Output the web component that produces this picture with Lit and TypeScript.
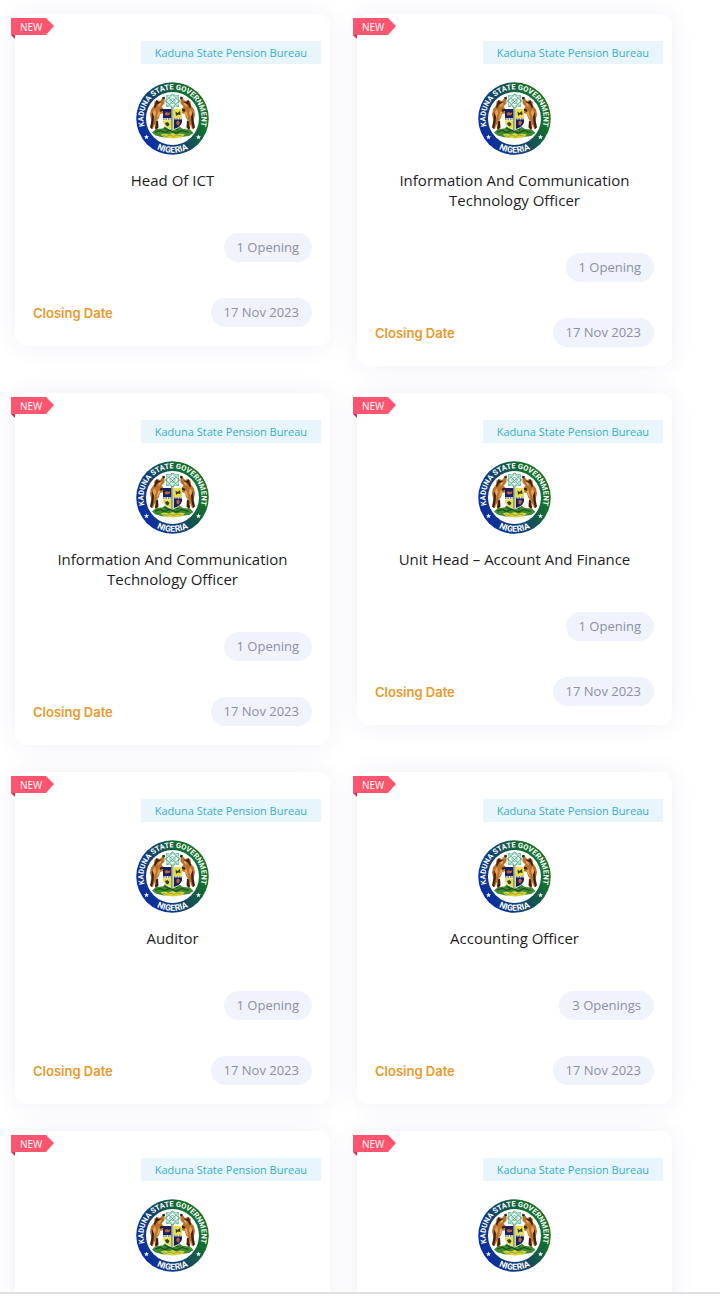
import { LitElement, html, css } from "lit";
import { customElement, property } from "lit/decorators.js";

interface Job {
  title: string;
  openings: number;
  closes: string;
  isNew: boolean;
}

const EMPLOYER = "Kaduna State Pension Bureau";

const job = (title: string, openings = 1): Job => ({
  title,
  openings,
  closes: "17 Nov 2023",
  isNew: true,
});

const JOBS: Job[] = [
  job("Head Of ICT"),
  job("Information And Communication Technology Officer"),
  job("Information And Communication Technology Officer"),
  job("Unit Head – Account And Finance"),
  job("Auditor"),
  job("Accounting Officer", 3),
  job("Planning Officer"),
  job("Planning Officer"),
];

@customElement("state-seal")
export class StateSeal extends LitElement {
  static styles = css`
    :host {
      display: block;
      width: 73px;
      height: 73px;
    }
    svg {
      display: block;
      width: 100%;
      height: 100%;
    }
    .lettering {
      font-family: Roboto, sans-serif;
      font-weight: 700;
      font-size: 15px;
      fill: #fff;
    }
    .country {
      font-size: 17px;
    }
  `;

  render() {
    return html`
      <svg viewBox="0 0 146 146" role="img" aria-label="Kaduna State Government seal">
        <defs>
          <linearGradient id="ring" x1="0.1" y1="0.75" x2="0.9" y2="0.3">
            <stop offset="0" stop-color="#0a2ea2" />
            <stop offset="0.5" stop-color="#134a62" />
            <stop offset="0.85" stop-color="#14702b" />
          </linearGradient>
          <path id="top" d="M18.5 92.8A58 58 0 1 1 127.500 92.800" />
          <path id="bottom" d="M4.500 73A68.500 68.500 0 0 0 141.500 73" />
          <path id="star" d="M0-5 1.300-1.600 5-1.500 2.100.8 3.100 4.300 0 2.300-3.100 4.300-2.100.8-5-1.500-1.300-1.600z" />
          <g id="horse">
            <path d="M53 32l4-1 0 12-6 6 4 5-2 5 3 3-8 2-2 8-5 6 2 12-2 7-3-2-1-11-3 10-4-1 1-15-3-13 2-10 6-8 1-8 6-3 5 2z" fill="#b9732d" />
            <path d="M45 43l5-2 0 4-5 6zM34 60l4-6 2 9-5 12zM45 58l5 0-4 10-5 7z" fill="#e8a552" />
            <path d="M41 36l4 4 6-1-3 3-6 3-4 8-2-3zM32 60l-1 16-3 15 4 3 3-13 1-12zM40 79l4-2 1 14-4 4-3-3 2-5zM49 54l6 0-1 4-7 2zM52 31l5-2 1 5-4 1z" fill="#3c2010" />
          </g>
        </defs>
        <circle cx="73" cy="73" r="72.500" fill="url(#ring)" />
        <circle cx="73" cy="73" r="53" fill="#fff" />
        <text class="lettering" text-anchor="middle">
          <textPath href="#top" startOffset="50%">KADUNA STATE GOVERNMENT</textPath>
        </text>
        <text class="lettering country" text-anchor="middle">
          <textPath href="#bottom" startOffset="50%">NIGERIA</textPath>
        </text>
        <use href="#star" x="21" y="110" fill="#fff" />
        <use href="#star" x="125" y="110" fill="#fff" />
        <g fill="none" stroke="#2fa577" stroke-width="1.600">
          <path d="M61 27l6 1 6-4 6 4 6-1-1 6 3 5-3 5 1 6-6-1-6 4-6-4-6 1 1-6-3-5 3-5z" />
          <path d="M63 30l20 18M83 30L63 48M60 38l13-12 13 12-13 12zM67 38l6-6 6 6-6 6z" />
        </g>
        <path d="M32 101l8-7 13-1 7-6 25 1 9 6 14 1 7 7-9 6-17 2-16-1-18 2-16-4z" fill="#3c8a32" />
        <path d="M38 100l11-3 8 4 11-4 12 5 12-5 13 4M57 93l9 4 9-5 9 4" fill="none" stroke="#1d4f20" stroke-width="2.500" />
        <path d="M49 105l8-2 8 2 8-3 8 3 8-2 9 2-7 6-17 2-17-2z" fill="#d9d238" />
        <path d="M54 107l7 2 7-3 7 3 8-3 8 2" fill="none" stroke="#8a9a24" stroke-width="1.500" />
        <use href="#horse" />
        <use href="#horse" transform="matrix(-1 0 0 1 146 0)" />
        <path d="M54 54h38v25q0 12-19 18-19-6-19-18z" fill="#eef0e0" />
        <path d="M54 54h17v18H54zM76 75h16v5q-2 10-16 14z" fill="#1a1e63" />
        <path d="M76 54h16v18H76zM54 77h17v17q-15-5-17-13z" fill="#e7e04a" />
        <path d="M57 63l4-3 4 2 4-2-2 6-8 1z" fill="#b8663a" />
        <path d="M79 59l4 3 5-4 1 8-5-1-4 3zM58 82l5-2 4 4-3 5-4-2z" fill="#3a3d26" />
        <path d="M81 79l4-2 3 4-3 6-4-2z" fill="#b86a2e" />
        <path d="M54 74h17M76 74h16" stroke="#2b2f66" stroke-width="2" stroke-dasharray="3 2" />
        <path d="M71 50h4v46h-4z" fill="#a9b77b" />
        <path d="M71 50v46" stroke="#5d7040" />
      </svg>
    `;
  }
}

@customElement("job-card")
export class JobCard extends LitElement {
  static styles = css`
    :host {
      display: block;
    }
    .card {
      position: relative;
      box-sizing: border-box;
      display: flex;
      flex-direction: column;
      align-items: center;
      padding: 27px 18px 19px;
      border-radius: 12px;
      background: #fff;
      box-shadow: 0 0 26px rgba(60, 60, 150, 0.07);
    }
    .ribbon {
      position: absolute;
      top: 4px;
      left: -4px;
      isolation: isolate;
      box-sizing: border-box;
      width: 43px;
      height: 21px;
      padding-left: 9px;
      font-size: 10px;
      line-height: 18px;
      color: #fff;
    }
    .ribbon::before,
    .ribbon::after {
      content: "";
      position: absolute;
      inset: 0;
      z-index: -1;
      background: #fd5570;
      clip-path: polygon(0 0, 35px 0, 43px 8px, 35px 17px, 0 17px);
    }
    .ribbon::after {
      background: #d92b50;
      clip-path: polygon(0 17px, 4px 17px, 4px 21px);
    }
    .employer {
      align-self: flex-end;
      margin-right: -9px;
      padding: 0 14px;
      font-size: 11px;
      line-height: 23px;
      color: #35aecb;
      background: #e8f6fc;
    }
    .seal {
      margin-top: 18px;
    }
    .title {
      margin: 15px 0 43px;
      max-width: 250px;
      font-size: 15px;
      font-weight: 400;
      line-height: 20px;
      text-align: center;
      color: #1d1d1f;
    }
    .row {
      align-self: stretch;
      display: flex;
      align-items: center;
      justify-content: flex-end;
    }
    .closing {
      margin-top: 36px;
      justify-content: space-between;
    }
    .label {
      font-family: Inter, sans-serif;
      font-size: 13px;
      font-weight: 600;
      color: #e9992b;
    }
    .pill {
      padding: 0 13px;
      border-radius: 15px;
      font-size: 13px;
      line-height: 29px;
      color: #8b90a5;
      background: #f0f3fc;
    }
  `;

  @property({ attribute: false }) job!: Job;

  render() {
    const { title, openings, closes, isNew } = this.job;
    return html`
      <article class="card">
        ${isNew ? html`<span class="ribbon">NEW</span>` : ""}
        <span class="employer">${EMPLOYER}</span>
        <state-seal class="seal"></state-seal>
        <h2 class="title">${title}</h2>
        <div class="row">
          <span class="pill">${openings} ${openings === 1 ? "Opening" : "Openings"}</span>
        </div>
        <div class="row closing">
          <span class="label">Closing Date</span>
          <time class="pill" datetime="2023-11-17">${closes}</time>
        </div>
      </article>
    `;
  }
}

@customElement("app-root")
export class AppRoot extends LitElement {
  static styles = css`
    :host {
      display: flex;
      flex-direction: column;
      height: 100vh;
      font-family: "Open Sans", sans-serif;
      background: #fff;
    }
    .listing {
      flex: 1;
      min-height: 0;
      overflow: hidden;
      box-sizing: border-box;
      display: grid;
      grid-template-columns: repeat(2, minmax(0, 1fr));
      grid-auto-rows: max-content;
      align-items: start;
      gap: 27px;
      padding: 14px 48px 0 15px;
    }
    .footer {
      height: 15px;
      border-top: 2px solid #dfdfdf;
    }
  `;

  render() {
    return html`
      <main class="listing">${JOBS.map((j) => html`<job-card .job=${j}></job-card>`)}</main>
      <footer class="footer"></footer>
    `;
  }
}
